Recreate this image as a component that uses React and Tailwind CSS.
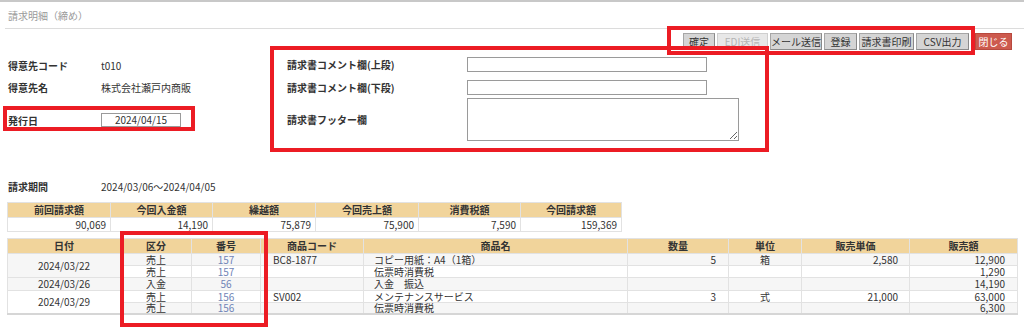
import React from "react";

const F = { fontFamily: '"Noto Sans CJK JP", "Noto Sans", sans-serif' };

function Btn({ w, children, kind }) {
  const cls =
    kind === "disabled"
      ? "bg-[#e8e8e8] text-[#b4b4b4] border-[#cfcfcf]"
      : kind === "close"
      ? "bg-[#cd5a4e] text-white border-[#b8493e]"
      : "bg-[#d5d5d5] text-[#333] border-[#a6a6a6] border-b-[#8a8a8a] border-r-[#8a8a8a]";
  return (
    <div className={`h-[17px] ${w} border flex items-center justify-center text-[10px] leading-none ${cls}`}>
      {children}
    </div>
  );
}

const detailRows = [
  { date: "2024/03/22", span: 2, dateBg: "bg-[#f6f6f6]", bg: "bg-[#f6f6f6]", h: "h-[12px]", kubun: "売上", no: "157", code: "BC8-1877", name: "コピー用紙：A4（1箱）", qty: "5", unit: "箱", price: "2,580", amt: "12,900" },
  { bg: "bg-white", h: "h-[12px]", kubun: "売上", no: "157", code: "", name: "伝票時消費税", qty: "", unit: "", price: "", amt: "1,290" },
  { date: "2024/03/26", span: 1, dateBg: "bg-[#f6f6f6]", bg: "bg-[#f6f6f6]", h: "h-[13px]", kubun: "入金", no: "56", code: "", name: "入金　振込", qty: "", unit: "", price: "", amt: "14,190" },
  { date: "2024/03/29", span: 2, dateBg: "bg-white", bg: "bg-white", h: "h-[12px]", kubun: "売上", no: "156", code: "SV002", name: "メンテナンスサービス", qty: "3", unit: "式", price: "21,000", amt: "63,000" },
  { bg: "bg-[#f6f6f6]", h: "h-[11px]", kubun: "売上", no: "156", code: "", name: "伝票時消費税", qty: "", unit: "", price: "", amt: "6,300" },
];

export default function App() {
  const td = "border border-[#e2e2e2] p-0 leading-none";
  return (
    <div className="w-[1024px] h-[333px] bg-white relative overflow-hidden text-[#333]" style={F}>
      <div className="h-[2px] bg-[#c8c8c8]" />
      <div className="h-[26px] pl-[8px] flex items-center text-[10px] text-[#9a9a9a]">請求明細（締め）</div>
      <div className="ml-[5px] h-px bg-[#dcdcdc]" />

      {/* buttons */}
      <div className="mt-[4px] flex justify-end pr-[12px]">
        <div className="flex gap-[2px]">
          <Btn w="w-[32px]">確定</Btn>
          <Btn w="w-[51px]" kind="disabled">EDI送信</Btn>
          <Btn w="w-[52px]">メール送信</Btn>
          <Btn w="w-[33px]">登録</Btn>
          <Btn w="w-[55px]">請求書印刷</Btn>
          <Btn w="w-[53px]">CSV出力</Btn>
        </div>
        <div className="ml-[6px]">
          <Btn w="w-[37px]" kind="close">閉じる</Btn>
        </div>
      </div>

      {/* main */}
      <div className="mt-[5px] h-[87px] flex pl-[8px] text-[10px]">
        <div className="w-[279px]">
          <div className="h-[20px] flex items-center">
            <div className="w-[93px] font-bold">得意先コード</div>
            <div>t010</div>
          </div>
          <div className="mt-[2px] h-[20px] flex items-center">
            <div className="w-[93px] font-bold">得意先名</div>
            <div>株式会社瀬戸内商販</div>
          </div>
          <div className="mt-[13px] h-[20px] flex items-center">
            <div className="w-[93px] font-bold">発行日</div>
            <div className="w-[80px] h-[14px] border border-[#9a9a9a] flex items-center justify-center leading-none">2024/04/15</div>
          </div>
        </div>
        <div>
          <div className="mt-[2px] h-[15px] flex items-center">
            <div className="w-[180px] font-bold">請求書コメント欄(上段)</div>
            <input className="w-[240px] h-[15px] border border-[#9a9a9a] bg-white outline-none" />
          </div>
          <div className="mt-[8px] h-[15px] flex items-center">
            <div className="w-[180px] font-bold">請求書コメント欄(下段)</div>
            <input className="w-[240px] h-[15px] border border-[#9a9a9a] bg-white outline-none" />
          </div>
          <div className="mt-[3px] h-[43px] flex items-center">
            <div className="w-[180px] font-bold">請求書フッター欄</div>
            <textarea className="w-[272px] h-[43px] border border-[#9a9a9a] bg-white outline-none resize" />
          </div>
        </div>
      </div>

      {/* period */}
      <div className="mt-[36px] h-[16px] flex items-center pl-[8px] text-[10px]">
        <div className="w-[93px] font-bold">請求期間</div>
        <div>2024/03/06～2024/04/05</div>
      </div>

      {/* summary */}
      <table className="mt-[8px] ml-[7px] w-[614px] table-fixed border-collapse text-[10px]">
        <colgroup>
          <col className="w-[103px]" />
          <col className="w-[102px]" />
          <col className="w-[103px]" />
          <col className="w-[103px]" />
          <col className="w-[102px]" />
          <col className="w-[101px]" />
        </colgroup>
        <thead>
          <tr className="h-[15px] bg-[#f1d49b]">
            {["前回請求額", "今回入金額", "繰越額", "今回売上額", "消費税額", "今回請求額"].map((h) => (
              <th key={h} className={`${td} font-bold text-center`}>{h}</th>
            ))}
          </tr>
        </thead>
        <tbody>
          <tr className="h-[14px] bg-white">
            {["90,069", "14,190", "75,879", "75,900", "7,590", "159,369"].map((v) => (
              <td key={v} className={`${td} text-right pr-[4px]`}>{v}</td>
            ))}
          </tr>
        </tbody>
      </table>

      {/* detail */}
      <table className="mt-[6px] ml-[7px] w-[1010px] table-fixed border-collapse text-[10px] border-b-2 border-b-[#d6d6d6]">
        <colgroup>
          <col className="w-[113px]" />
          <col className="w-[71px]" />
          <col className="w-[69px]" />
          <col className="w-[103px]" />
          <col className="w-[264px]" />
          <col className="w-[101px]" />
          <col className="w-[73px]" />
          <col className="w-[108px]" />
          <col className="w-[108px]" />
        </colgroup>
        <thead>
          <tr className="h-[15px] bg-[#f1d49b]">
            {["日付", "区分", "番号", "商品コード", "商品名", "数量", "単位", "販売単価", "販売額"].map((h) => (
              <th key={h} className={`${td} font-bold text-center`}>{h}</th>
            ))}
          </tr>
        </thead>
        <tbody>
          {detailRows.map((r, i) => (
            <tr key={i} className={`${r.h} ${r.bg}`}>
              {r.date && (
                <td rowSpan={r.span} className={`${td} ${r.dateBg} text-center`}>{r.date}</td>
              )}
              <td className={`${td} text-center`}>{r.kubun}</td>
              <td className={`${td} text-center text-[#7084b6]`}>{r.no}</td>
              <td className={`${td} pl-[12px]`}>{r.code}</td>
              <td className={`${td} pl-[10px]`}>{r.name}</td>
              <td className={`${td} text-right pr-[12px]`}>{r.qty}</td>
              <td className={`${td} text-center`}>{r.unit}</td>
              <td className={`${td} text-right pr-[11px]`}>{r.price}</td>
              <td className={`${td} text-right pr-[12px]`}>{r.amt}</td>
            </tr>
          ))}
        </tbody>
      </table>

      {/* red annotation boxes */}
      <div className="absolute left-[667px] top-[26px] w-[308px] h-[29px] border-4 border-[#ec1c24] pointer-events-none" />
      <div className="absolute left-[270px] top-[46px] w-[499px] h-[106px] border-4 border-[#ec1c24] pointer-events-none" />
      <div className="absolute left-[3px] top-[106px] w-[192px] h-[25px] border-4 border-[#ec1c24] pointer-events-none" />
      <div className="absolute left-[120px] top-[231px] w-[148px] h-[96px] border-4 border-[#ec1c24] pointer-events-none" />
    </div>
  );
}
